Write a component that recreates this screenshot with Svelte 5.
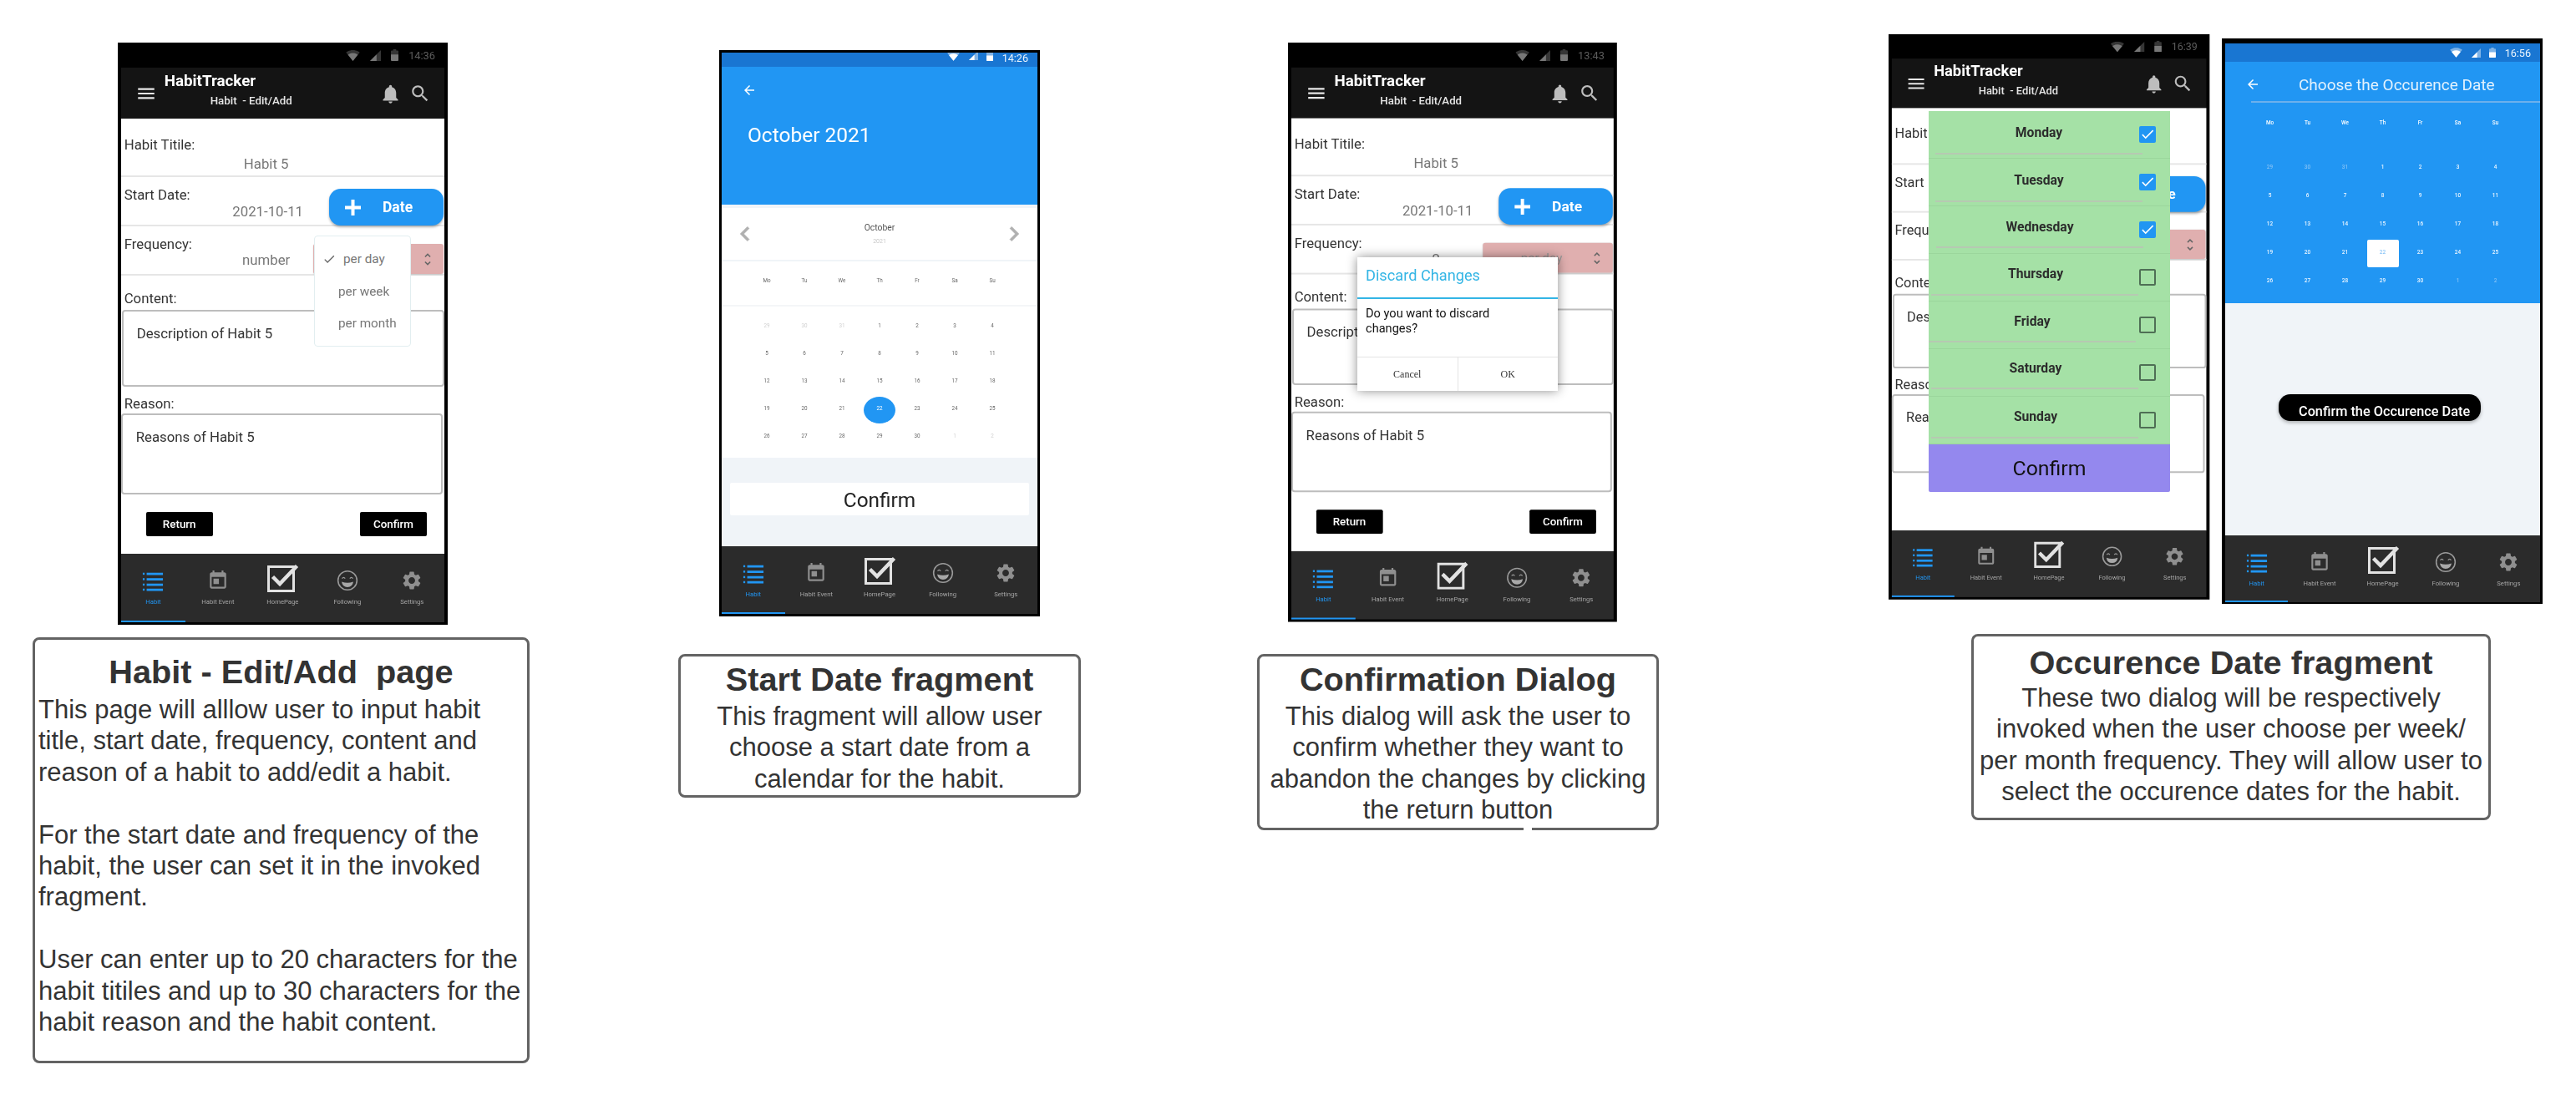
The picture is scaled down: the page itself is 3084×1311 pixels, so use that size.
<script>
  const weekdays = ['Mo', 'Tu', 'We', 'Th', 'Fr', 'Sa', 'Su'];
  const dates = [
    [29, 1], [30, 1], [31, 1], [1], [2], [3], [4],
    [5], [6], [7], [8], [9], [10], [11],
    [12], [13], [14], [15], [16], [17], [18],
    [19], [20], [21], [22, 0, 1], [23], [24], [25],
    [26], [27], [28], [29], [30], [1, 1], [2, 1]
  ];
  const days = [
    { name: 'Monday', cx: 132, line: 8, on: true, dy: 0, ld: 0 },
    { name: 'Tuesday', cx: 132, line: 8, on: true, dy: 0, ld: 0 },
    { name: 'Wednesday', cx: 133, line: 9, on: true, dy: -1, ld: -2 },
    { name: 'Thursday', cx: 128, line: 3, on: false, dy: -2, ld: -2 },
    { name: 'Friday', cx: 124, line: 0, on: false, dy: -2, ld: -3 },
    { name: 'Saturday', cx: 128, line: 3, on: false, dy: -3, ld: -4 },
    { name: 'Sunday', cx: 128, line: 3, on: false, dy: -2, ld: -2 }
  ];
  const navItems = ['Habit', 'Habit Event', 'HomePage', 'Following', 'Settings'];
</script>

{#snippet status(time, kind)}
  <div class="status {kind}">
    <svg class="wifi" viewBox="0 3 24 18.5"><path class="fade" d="M12.01 21.49L23.64 7c-.45-.34-4.93-4-11.64-4C5.28 3 .81 6.66.36 7l11.63 14.49.01.01.01-.01z"/><path d="M3.53 10.95l8.46 10.54.01.01.01-.01 8.46-10.54C20.04 10.62 16.81 8 12 8c-4.81 0-8.04 2.62-8.47 2.95z"/></svg>
    <svg class="signal" viewBox="2 2 20 20"><path class="fade" d="M2 22h20V2z"/><path d="M2 22h12V10z"/></svg>
    <svg class="battery" viewBox="7 2 10 20" preserveAspectRatio="none"><path class="fade" d="M15.67 4H14V2h-4v2H8.33C7.6 4 7 4.6 7 5.33v15.33C7 21.4 7.6 22 8.33 22h7.33c.74 0 1.34-.6 1.34-1.33V5.33C17 4.6 16.4 4 15.67 4z"/><path d="M7 11h10v9.67C17 21.4 16.4 22 15.67 22H8.33C7.6 22 7 21.4 7 20.67z"/></svg>
    <span class="time">{time}</span>
  </div>
{/snippet}

{#snippet navIcon(i)}
  {#if i === 0}
    <svg class="ni" viewBox="0 0 28 28"><g fill="#2196f3"><rect x="6" y="4" width="21" height="3"/><rect x="6" y="11" width="21" height="3"/><rect x="6" y="18" width="21" height="3"/><rect x="6" y="24.5" width="21" height="3"/><rect x="1" y="4" width="2.4" height="2.6"/><rect x="1" y="11" width="2.4" height="2.6"/><rect x="1" y="18" width="2.4" height="2.6"/><rect x="1" y="24.5" width="2.4" height="2.6"/></g></svg>
  {:else if i === 1}
    <svg class="ni" viewBox="0 0 24 24"><path fill="#8f8f8f" d="M13 10H7v6h6zM16 1v2H8V1H6v2H5c-1.11 0-2 .9-2 2v14c0 1.1.89 2 2 2h14c1.1 0 2-.9 2-2V5c0-1.1-.9-2-2-2h-1V1h-2zm3 18H5V8h14v11z"/></svg>
  {:else if i === 2}
    <svg class="ni home" viewBox="0 0 38 34"><path fill="none" stroke="#e2e2e2" stroke-width="3" d="M1.5 3.5h30v29h-30z"/><path fill="none" stroke="#e2e2e2" stroke-width="4.5" d="M6.5 15.5l8.5 8.5L35.5 2.5"/></svg>
  {:else if i === 3}
    <svg class="ni" viewBox="0 0 28 28"><circle cx="14" cy="14" r="12.2" fill="none" stroke="#9a9a9a" stroke-width="1.7"/><path d="M7 11.5q2-2.8 4 0M17 11.5q2-2.8 4 0" fill="none" stroke="#9a9a9a" stroke-width="1.4"/><path fill="#a8a8a8" d="M6.5 15.5q7.5 3 15 0q-1 7-7.5 7t-7.5-7z"/></svg>
  {:else}
    <svg class="ni gear" viewBox="2 2 20 20"><path fill="#8f8f8f" d="M19.14 12.94c.04-.3.06-.61.06-.94 0-.32-.02-.64-.07-.94l2.03-1.58c.18-.14.23-.41.12-.61l-1.92-3.32c-.12-.22-.37-.29-.59-.22l-2.39.96c-.5-.38-1.03-.7-1.62-.94l-.36-2.54c-.04-.24-.24-.41-.48-.41h-3.84c-.24 0-.43.17-.47.41l-.36 2.54c-.59.24-1.13.57-1.62.94l-2.39-.96c-.22-.08-.47 0-.59.22L2.74 8.87c-.12.21-.08.47.12.61l2.03 1.58c-.05.3-.09.63-.09.94s.02.64.07.94l-2.03 1.58c-.18.14-.23.41-.12.61l1.92 3.32c.12.22.37.29.59.22l2.39-.96c.5.38 1.03.7 1.62.94l.36 2.54c.05.24.24.41.48.41h3.84c.24 0 .44-.17.47-.41l.36-2.54c.59-.24 1.13-.56 1.62-.94l2.39.96c.22.08.47 0 .59-.22l1.92-3.32c.12-.22.07-.47-.12-.61l-2.01-1.58zM12 15.6c-1.98 0-3.6-1.62-3.6-3.6s1.62-3.6 3.6-3.6 3.6 1.62 3.6 3.6-1.62 3.6-3.6 3.6z"/></svg>
  {/if}
{/snippet}

{#snippet bottomNav()}
  <nav class="nav">
    {#each navItems as label, i}
      <div class="nav-item" class:active={i === 0}>
        <div class="nav-icon">{@render navIcon(i)}</div>
        <span>{label}</span>
      </div>
    {/each}
  </nav>
{/snippet}

{#snippet formScreen(time, freq, spinText, showActions)}
  {@render status(time, 'dark')}
  <header class="appbar">
    <svg class="menu" viewBox="0 0 24 24"><path d="M3 18h18v-2H3v2zm0-5h18v-2H3v2zm0-7v2h18V6H3z"/></svg>
    <div class="titles">
      <div class="t1">HabitTracker</div>
      <div class="t2">Habit&nbsp; - Edit/Add</div>
    </div>
    <svg class="bell" viewBox="0 0 24 24"><path d="M12 22c1.1 0 2-.9 2-2h-4c0 1.1.89 2 2 2zm6-6v-5c0-3.07-1.64-5.64-4.5-6.32V4c0-.83-.67-1.5-1.5-1.5s-1.5.67-1.5 1.5v.68C7.63 5.36 6 7.92 6 11v5l-2 2v1h16v-1l-2-2z"/></svg>
    <svg class="search" viewBox="0 0 24 24"><path d="M15.5 14h-.79l-.28-.27C15.41 12.59 16 11.11 16 9.5 16 5.91 13.09 3 9.5 3S3 5.91 3 9.5 5.91 16 9.5 16c1.61 0 3.09-.59 4.23-1.57l.27.28v.79l5 4.99L20.49 19l-4.99-5zm-6 0C7.01 14 5 11.99 5 9.5S7.01 5 9.5 5 14 7.01 14 9.5 11.99 14 9.5 14z"/></svg>
  </header>
  <div class="form">
    <div class="row r1">
      <div class="col">
        <div class="label">Habit Titile:</div>
        <div class="value v1">Habit 5</div>
      </div>
    </div>
    <div class="row r2">
      <div class="col">
        <div class="label">Start Date:</div>
        <div class="value v2">2021-10-11</div>
      </div>
      <div class="date-btn">
        <svg viewBox="0 0 19 19"><path d="M7.5 0h4v7.5H19v4h-7.5V19h-4v-7.5H0v-4h7.5z"/></svg>
        <span>Date</span>
      </div>
    </div>
    <div class="row r3">
      <div class="col">
        <div class="label">Frequency:</div>
        <div class="value v3">{freq}</div>
      </div>
      <div class="spinner">
        <span>{spinText}</span>
        <svg viewBox="7 3 10 18"><path d="M12 5.83L15.17 9l1.41-1.41L12 3 7.41 7.59 8.83 9 12 5.83zm0 12.34L8.83 15l-1.41 1.41L12 21l4.59-4.59L15.17 15 12 18.17z"/></svg>
      </div>
    </div>
    <div class="label content-label">Content:</div>
    <div class="field f1">Description of Habit 5</div>
    <div class="label reason-label">Reason:</div>
    <div class="field f2">Reasons of Habit 5</div>
    {#if showActions}
      <div class="actions">
        <div class="act">Return</div>
        <div class="act">Confirm</div>
      </div>
    {/if}
  </div>
  {@render bottomNav()}
{/snippet}

<div class="canvas">
  <!-- Habit edit/add -->
  <section class="phone form-phone p1">{@render formScreen('14:36', 'number', '', true)}</section>
  <div class="popup">
    <div class="pop-item first"><svg viewBox="3 5 19 15"><path d="M9 16.17L4.83 12l-1.42 1.41L9 19 21 7l-1.41-1.41z"/></svg>per day</div>
    <div class="pop-item">per week</div>
    <div class="pop-item">per month</div>
  </div>

  <!-- Start date -->
  <section class="phone p2">
    {@render status('14:26', 'blue clip')}
    <div class="date-head">
      <svg viewBox="4 4 16 16"><path d="M20 11H7.83l5.59-5.59L12 4l-8 8 8 8 1.41-1.41L7.83 13H20v-2z"/></svg>
      <div class="big">October 2021</div>
    </div>
    <div class="month">
      <svg viewBox="0 0 24 24"><path d="M15.41 7.41L14 6l-6 6 6 6 1.41-1.41L10.83 12z"/></svg>
      <div class="month-name"><div>October</div><div class="yr">2021</div></div>
      <svg viewBox="0 0 24 24"><path d="M10 6L8.59 7.41 13.17 12l-4.58 4.59L10 18l6-6z"/></svg>
    </div>
    <div class="weekrow">
      {#each weekdays as d}<span>{d}</span>{/each}
    </div>
    <div class="dates">
      {#each dates as [n, off, sel]}
        <span class:off class:sel>{n}</span>
      {/each}
    </div>
    <div class="confirm-area"><div class="confirm-wide">Confirm</div></div>
    {@render bottomNav()}
  </section>

  <!-- Dialog -->
  <section class="phone form-phone p3">{@render formScreen('13:43', '2', 'per day', true)}</section>
  <div class="dialog">
    <div class="dlg-title">Discard Changes</div>
    <div class="dlg-msg">Do you want to discard changes?</div>
    <div class="dlg-actions"><span>Cancel</span><span>OK</span></div>
  </div>

  <!-- Occurrence, week -->
  <section class="phone form-phone p4">{@render formScreen('16:39', '', '', false)}</section>
  <div class="week-panel">
    {#each days as d}
      <div class="day">
        <div class="day-name" style:width="{d.cx * 2}px" style:margin-top="{d.dy}px">{d.name}</div>
        <div class="day-line" style:margin-left="{d.line}px" style:margin-top="{13 + d.ld - d.dy}px"></div>
        <div class="box" class:on={d.on}>
          {#if d.on}<svg viewBox="3 5 19 15"><path d="M9 16.17L4.83 12l-1.42 1.41L9 19 21 7l-1.41-1.41z"/></svg>{/if}
        </div>
      </div>
    {/each}
    <div class="week-confirm">Confirm</div>
  </div>

  <!-- Occurrence, month -->
  <section class="phone p5">
    {@render status('16:56', 'blue')}
    <div class="occ">
      <div class="occ-head">
        <svg viewBox="4 4 16 16"><path d="M20 11H7.83l5.59-5.59L12 4l-8 8 8 8 1.41-1.41L7.83 13H20v-2z"/></svg>
        <div>Choose the Occurence Date</div>
      </div>
      <div class="weekrow occ-week">
        {#each weekdays as d}<span>{d}</span>{/each}
      </div>
      <div class="dates occ-dates">
        {#each dates as [n, off, sel]}
          <span class:off class:sel>{n}</span>
        {/each}
      </div>
    </div>
    <div class="occ-body"><div class="occ-btn">Confirm the Occurence Date</div></div>
    {@render bottomNav()}
  </section>

  <!-- Notes -->
  <div class="note n1">
    <h2>Habit - Edit/Add&nbsp; page</h2>
    <p>This page will alllow user to input habit<br>title, start date, frequency, content and<br>reason of a habit to add/edit a habit.<br><br>For the start date and frequency of the<br>habit, the user can set it in the invoked<br>fragment.<br><br>User can enter up to 20 characters for the<br>habit titiles and up to 30 characters for the<br>habit reason and the habit content.</p>
  </div>
  <div class="note n2">
    <h2>Start Date fragment</h2>
    <p>This fragment will allow user<br>choose a start date from a<br>calendar for the habit.</p>
  </div>
  <div class="note n3">
    <h2>Confirmation Dialog</h2>
    <p>This dialog will ask the user to<br>confirm whether they want to<br>abandon the changes by clicking<br>the return button</p>
  </div>
  <div class="note n4">
    <h2>Occurence Date fragment</h2>
    <p>These two dialog will be respectively<br>invoked when the user choose per week/<br>per month frequency. They will allow user to<br>select the occurence dates for the habit.</p>
  </div>
</div>

<style>
  :global(body) { margin: 0; background: #fff; }
  .canvas {
    position: relative; width: 3084px; height: 1311px; overflow: hidden;
    background: #fff; font-family: Roboto, sans-serif;
  }
  svg { display: block; fill: currentColor; }

  /* phones: free items on the board */
  .phone {
    position: absolute; box-sizing: border-box; display: flex; flex-direction: column;
    background: #000; overflow: hidden; filter: blur(.35px);
  }
  .form-phone { width: 395px; height: 697px; padding: 0 4px 3px 3.7px; transform-origin: 0 0; }
  .p1 { left: 141px; top: 51px; }
  .p2 { left: 861px; top: 60px; width: 384px; height: 678px; padding: 3px; }
  .p3 { left: 1542px; top: 51px; transform: scale(.997, .995); }
  .p4 { left: 2261px; top: 41px; transform: scale(.973, .971); }
  .p5 { left: 2660px; top: 46px; width: 384px; height: 677px; padding: 6px 3px 2px 4px; }

  /* status */
  .status {
    display: flex; align-items: center; justify-content: flex-end; gap: 12px;
    padding-right: 11px; flex: none; overflow: hidden;
  }
  .status .fade { opacity: .45; }
  .status.dark { height: 30px; background: #000; color: #777; }
  .status.dark .time { color: #5c5c5c; font-size: 12.8px; }
  .status.dark .wifi { width: 17px; height: 13px; }
  .status.dark .signal { width: 13px; height: 13px; }
  .status.dark .battery { width: 9px; height: 14px; }
  .status.blue { height: 22px; background: #1976d2; color: #fff; gap: 10.5px; }
  .status.blue .time { font-size: 12.6px; color: #eaf4fd; }
  .status.blue .wifi { width: 15px; height: 12px; }
  .status.blue .signal { width: 11px; height: 11px; }
  .status.blue .battery { width: 8px; height: 12px; }
  .status.clip { height: 17px; align-items: flex-start; }
  .status.clip svg { margin-top: -2px; }
  .status.clip .time { margin-top: -1px; }

  /* app bar */
  .appbar { display: flex; align-items: center; height: 61px; flex: none; background: #141414; color: #fff; padding: 0 16.5px 0 17px; }
  .menu { width: 26px; height: 26px; color: #e8e8e8; margin-top: 1px; }
  .titles { margin-left: 9px; align-self: flex-start; padding-top: 5px; }
  .t1 { font-weight: 700; font-size: 18.8px; line-height: 22px; }
  .t2 { font-weight: 500; font-size: 13.3px; line-height: 18px; margin-left: 55px; margin-top: 4px; color: #e6e6e6; }
  .bell { width: 27px; height: 27px; margin-left: auto; color: #bdbdbd; margin-top: 1px; }
  .search { width: 26px; height: 26px; margin-left: 9px; color: #bdbdbd; }

  /* form */
  .form { height: 521px; flex: none; background: #fff; color: #333; font-size: 16.8px; }
  .row { display: flex; border-bottom: 2px solid #e6e6e6; box-sizing: border-box; }
  .col { flex: 1; min-width: 0; }
  .label { padding-left: 4px; line-height: 20px; height: 20px; }
  .value { width: 348px; height: 20px; text-align: center; line-height: 20px; color: #777; }
  .r1 { height: 70px; padding-top: 21px; }
  .v1 { margin-top: 3px; }
  .r2 { height: 59px; padding-top: 11px; }
  .v2 { padding-left: 4px; box-sizing: border-box; }
  .r3 { height: 59px; padding-top: 11px; }
  .v3 { margin-top: -1px; }
  .date-btn {
    display: flex; align-items: center; box-sizing: border-box; width: 137px; height: 44px;
    margin: 3px 1px 0 0; padding-left: 19px; border-radius: 14px; background: #2196f3; color: #fff;
    font-weight: 700; font-size: 17.5px; box-shadow: 0 2px 3px rgba(0,0,0,.3);
  }
  .date-btn svg { width: 19px; height: 19px; margin-right: 26px; }
  .spinner {
    display: flex; align-items: center; width: 156px; height: 36px; margin: 10px 1px 0 0; flex: none;
    background: #e0afaf; border-radius: 3px; color: #999; font-size: 15.3px; box-shadow: 0 1px 2px rgba(0,0,0,.15);
  }
  .spinner span { flex: 1; text-align: center; margin-left: 8px; }
  .spinner svg { width: 8px; height: 15px; margin-right: 15px; color: #666; }
  .content-label { margin-top: 17px; }
  .field { box-sizing: border-box; border: 2px solid #bdbdbd; border-radius: 4px; line-height: 20px; background: #fff; }
  .f1 { height: 92px; margin: 4px 0 0 1px; padding: 16px 0 0 16px; }
  .reason-label { margin-top: 10px; }
  .f2 { height: 97px; margin: 2px 2px 0 0; padding: 16px 0 0 16px; }
  .actions { display: flex; justify-content: space-between; margin: 21px 21px 0 30px; }
  .act { display: flex; align-items: center; justify-content: center; width: 80px; height: 29px; background: #000; color: #fff; font-size: 13.4px; font-weight: 500; border-radius: 2px; }

  /* bottom nav */
  .nav { display: flex; flex: 1; min-height: 0; background: #2b2b2b; }
  .nav-item {
    flex: 1; display: flex; flex-direction: column; align-items: center; box-sizing: border-box;
    padding-top: 16px; border-bottom: 2px solid transparent; color: #a6a6a6; font-size: 7.7px; line-height: 12px;
  }
  .nav-item.active { color: #2196f3; border-bottom-color: #2196f3; }
  .nav-icon { height: 32px; margin-bottom: 4px; display: flex; align-items: center; }
  .ni { width: 26px; height: 26px; }
  .ni.gear { width: 22px; height: 22px; }
  .ni.home { width: 38px; height: 34px; margin-top: -7px; margin-left: 2px; }

  /* popup menu over phone one */
  .popup {
    position: absolute; left: 376px; top: 282px; width: 116px; height: 133px; box-sizing: border-box;
    background: #fff; border: 1px solid #e2eef0; border-radius: 4px; color: #777; font-size: 15.3px; filter: blur(.3px);
  }
  .pop-item { display: flex; align-items: center; height: 38.5px; padding-left: 28px; position: relative; }
  .pop-item.first { margin-top: 8px; padding-left: 34px; }
  .pop-item svg { position: absolute; left: 11px; width: 13px; height: 11px; color: #666; }

  /* start date */
  .date-head { height: 165px; flex: none; background: #2196f3; color: #fff; border-bottom: 4px solid #f0f4f8; box-sizing: content-box; }
  .date-head svg { width: 12px; height: 12px; margin: 22px 0 0 27px; }
  .big { font-size: 24.5px; line-height: 30px; margin: 33px 0 0 31px; }
  .month { display: flex; align-items: center; justify-content: space-between; height: 64px; flex: none; box-sizing: border-box; background: #fff; border-bottom: 2px solid #f0f4f8; padding: 0 11px; color: #b0b0b0; }
  .month svg { width: 34px; height: 34px; }
  .month svg path { stroke: currentColor; stroke-width: .6px; }
  .month-name { text-align: center; font-size: 10.4px; color: #555; line-height: 12px; margin-top: 2px; }
  .yr { font-size: 7px; color: #c8c8c8; margin-top: 4px; line-height: 12px; }
  .weekrow { display: grid; grid-template-columns: repeat(7, 45px); justify-content: center; height: 54px; flex: none; box-sizing: border-box; background: #fff; border-bottom: 2px solid #f4f6f8; padding-top: 17px; font-size: 6.3px; line-height: 12px; color: #666; text-align: center; }
  .dates { display: grid; grid-template-columns: repeat(7, 45px); grid-auto-rows: 33px; justify-content: center; height: 181px; flex: none; box-sizing: border-box; padding-top: 7px; background: #fff; font-size: 6.3px; text-align: center; line-height: 33px; color: #666; }
  .dates span { position: relative; }
  .dates .off { color: #d0d0d0; }
  .dates .sel { color: #fff; z-index: 0; }
  .dates .sel::before { content: ''; position: absolute; z-index: -1; left: 3.5px; top: 2px; width: 38px; height: 32px; background: #2196f3; border-radius: 50%; }
  .confirm-area { height: 106px; flex: none; background: #f0f4f8; padding: 30px 10px 0; box-sizing: border-box; }
  .confirm-wide { height: 39px; line-height: 41px; background: #fff; border-radius: 2px; text-align: center; color: #222; font-size: 24.4px; }

  /* dialog */
  .dialog {
    position: absolute; left: 1625px; top: 308px; width: 240px; height: 160px; display: flex; flex-direction: column;
    background: #fff; box-shadow: 0 0 12px rgba(0,0,0,.45); filter: blur(.25px);
  }
  .dlg-title { height: 50px; flex: none; box-sizing: border-box; padding: 11px 0 0 10px; line-height: 22px; border-bottom: 2px solid #33b5e5; color: #33b5e5; font-size: 18.2px; }
  .dlg-msg { flex: 1; padding: 8px 24px 0 10px; font-size: 14.6px; line-height: 18px; color: #111; }
  .dlg-actions { display: flex; height: 40px; flex: none; border-top: 1px solid #e4e4e4; font-family: "Liberation Serif", serif; font-size: 12px; color: #333; }
  .dlg-actions span { flex: 1; display: flex; align-items: center; justify-content: center; }
  .dlg-actions span + span { border-left: 1px solid #e4e4e4; }

  /* week panel */
  .week-panel { position: absolute; left: 2309px; top: 133px; width: 289px; filter: blur(.3px); font-family: Roboto, sans-serif; }
  .day { position: relative; box-sizing: border-box; height: 57px; padding-top: 15px; background: #a5e1a6; border-bottom: 1px solid #9bd69c; }
  .day-name { height: 22px; text-align: center; font-weight: 700; font-size: 15.7px; line-height: 22px; color: #2c2c2c; }
  .day-line { width: 248px; height: 2px; background: #b6c9b2; }
  .box { position: absolute; left: 252px; top: 18px; width: 20px; height: 20px; box-sizing: border-box; border: 2px solid #4f6f55; border-radius: 2px; }
  .box.on { background: #2196f3; border: 0; color: #fff; display: flex; align-items: center; justify-content: center; }
  .box svg { width: 15px; height: 12px; }
  .week-confirm { height: 57px; line-height: 58px; text-align: center; background: #9488ee; color: #111; font-size: 24.8px; border-radius: 0 0 2px 2px; }

  /* occurrence month */
  .occ { height: 289px; flex: none; background: #2196f3; color: #fff; }
  .occ-head { display: flex; align-items: center; height: 49px; margin-left: 31px; box-sizing: border-box; border-bottom: 2px solid #6cb0ec; color: #e3f2fd; font-size: 19px; }
  .occ-head svg { width: 12px; height: 12px; margin-left: -4px; margin-right: 49px; color: #fff; margin-top: 6px; }
  .occ-head div { padding-top: 8px; line-height: 20px; }
  .occ-week { background: transparent; border: 0; height: 48px; padding-top: 18px; color: #fff; font-weight: 500; font-size: 6.4px; }
  .occ-dates { background: transparent; color: #eef7ff; grid-auto-rows: 34px; height: 181px; padding-top: 12px; line-height: 34px; font-size: 6.4px; font-weight: 500; }
  .occ-dates .off { color: #82c0f5; }
  .occ-dates .sel { color: #8ec6f7; }
  .occ-dates .sel::before { background: #fff; border-radius: 2px; left: 3.5px; top: 2px; width: 38px; height: 33px; }
  .occ-body { height: 278px; flex: none; background: #f0f4f8; padding: 109px 0 0 64px; box-sizing: border-box; }
  .occ-btn { width: 242px; height: 32px; box-sizing: border-box; padding: 5px 0 0 24px; line-height: 32px; background: #000; color: #fff; border-radius: 14px; font-weight: 500; font-size: 16.3px; white-space: nowrap; box-shadow: 0 2px 4px rgba(0,0,0,.3); }

  /* notes */
  .note { position: absolute; box-sizing: border-box; border: 3px solid #636363; border-radius: 8px; background: #fff; color: #333; font-family: "Liberation Sans", Arial, sans-serif; text-align: center; }
  .note h2 { margin: 0; font-weight: 700; font-size: 39.7px; line-height: 45px; white-space: nowrap; }
  .note p { margin: 3px 0 0; font-size: 31px; line-height: 37.4px; white-space: nowrap; }
  .n1 { left: 39px; top: 763px; width: 595px; height: 510px; padding-top: 16px; }
  .n1 p { text-align: left; padding-left: 4px; margin-top: 4px; }
  .n2 { left: 812px; top: 783px; width: 482px; height: 172px; padding-top: 5px; }
  .n3 { left: 1505px; top: 783px; width: 481px; height: 211px; padding-top: 5px; }
  .n3::after { content: ''; position: absolute; left: 316px; bottom: -4px; width: 10px; height: 5px; background: #fff; }
  .n4 { left: 2360px; top: 759px; width: 622px; height: 223px; padding-top: 9px; }
  .n4 p { margin-top: 1px; }
</style>
